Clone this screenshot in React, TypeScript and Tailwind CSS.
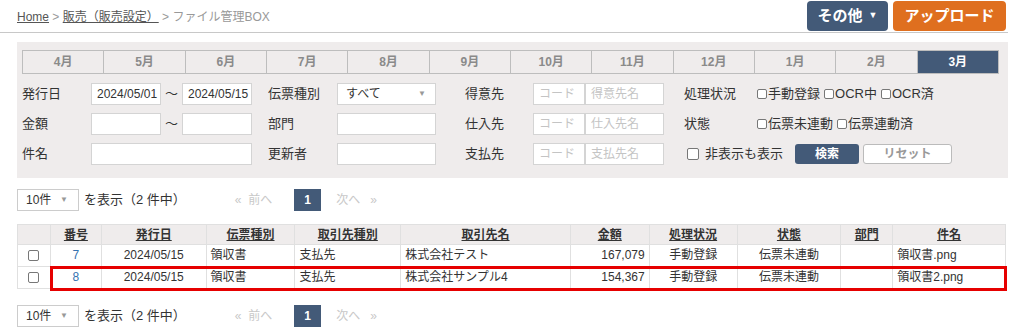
import React from "react";

const months = ["4月", "5月", "6月", "7月", "8月", "9月", "10月", "11月", "12月", "1月", "2月", "3月"];

const font = { fontFamily: '"Liberation Sans", "Noto Sans CJK JP", sans-serif' };

function Box({ w, placeholder, value }: { w: string; placeholder?: string; value?: string }) {
  return (
    <div className={`${w} h-[22px] border border-[#d4d4d4] bg-white px-[5px] text-[12px] leading-[20px] ${value ? "text-[#333]" : "text-[#c4c4c4]"}`}>
      {value ?? placeholder ?? ""}
    </div>
  );
}

function Check({ label }: { label: string }) {
  return (
    <span className="flex items-center mr-[4px]">
      <span className="w-[10px] h-[10px] border border-[#777] rounded-[2px] bg-white mr-[1px]" />
      {label}
    </span>
  );
}

function Pager() {
  return (
    <div className="flex items-center h-[22px] text-[13px] text-[#333]">
      <div className="w-[62px] h-[22px] border border-[#ccc] bg-white flex items-center justify-between pl-[8px] pr-[10px] text-[12px]">
        <span>10件</span>
        <span className="text-[#999] text-[8px]">▼</span>
      </div>
      <span className="ml-[5px]">を表示（2 件中）</span>
      <span className="ml-[49px] text-[#c8c8c8] text-[12px]">«&nbsp; 前へ</span>
      <span className="ml-[22px] w-[27px] h-[22px] bg-[#435a78] text-white font-bold text-[12px] flex items-center justify-center">1</span>
      <span className="ml-[15px] text-[#c8c8c8] text-[12px]">次へ&nbsp;&nbsp; »</span>
    </div>
  );
}

const cols = [
  { w: "w-[32px]", h: "", a: "text-center" },
  { w: "w-[51px]", h: "番号", a: "text-center" },
  { w: "w-[105px]", h: "発行日", a: "text-center" },
  { w: "w-[89px]", h: "伝票種別", a: "text-left pl-[4px]" },
  { w: "w-[106px]", h: "取引先種別", a: "text-left pl-[4px]" },
  { w: "w-[170px]", h: "取引先名", a: "text-left pl-[4px]" },
  { w: "w-[79px]", h: "金額", a: "text-right pr-[4px]" },
  { w: "w-[88px]", h: "処理状況", a: "text-center" },
  { w: "w-[104px]", h: "状態", a: "text-center" },
  { w: "w-[52px]", h: "部門", a: "text-center" },
  { w: "w-[113px]", h: "件名", a: "text-left pl-[4px]" },
];

const rows = [
  ["7", "2024/05/15", "領収書", "支払先", "株式会社テスト", "167,079", "手動登録", "伝票未連動", "", "領収書.png"],
  ["8", "2024/05/15", "領収書", "支払先", "株式会社サンプル4", "154,367", "手動登録", "伝票未連動", "", "領収書2.png"],
];

export default function App() {
  return (
    <div className="w-[1024px] h-[331px] bg-white text-[#333] overflow-hidden" style={font}>
      {/* header */}
      <div className="w-[1008px] h-[33px] border-b border-[#c8c8c8] flex items-start justify-between">
        <div className="pl-[17px] pt-[8px] text-[12px] text-[#999]">
          <span className="text-[#555] underline">Home</span>
          <span> &gt; </span>
          <span className="text-[#555] underline">販売（販売設定）</span>
          <span> &gt; ファイル管理BOX</span>
        </div>
        <div className="flex pt-[1px] pr-[2px] gap-[5px]">
          <div className="w-[81px] h-[30px] rounded-[4px] bg-[#435a78] text-white font-bold text-[15px] flex items-center justify-center gap-[6px]">
            その他<span className="text-[9px]">▼</span>
          </div>
          <div className="w-[113px] h-[30px] rounded-[4px] bg-[#df6f1f] text-white font-bold text-[15px] flex items-center justify-center">
            アップロード
          </div>
        </div>
      </div>

      {/* search panel */}
      <div className="ml-[17px] mt-[9px] w-[991px] h-[136px] bg-[#efecec] pt-[8px] pl-[5px]">
        <div className="flex w-[977px] h-[24px] border border-[#bdbdbd]">
          {months.map((m, i) => (
            <div
              key={m}
              className={`flex-1 flex items-center justify-center text-[12px] font-bold ${i > 0 ? "border-l border-[#bdbdbd]" : ""} ${i === 11 ? "bg-[#435a78] text-white" : "text-[#8a8a8a]"}`}
            >
              {m}
            </div>
          ))}
        </div>

        <div className="text-[13px] mt-[9px]">
          <div className="flex items-center h-[22px]">
            <span className="w-[69px]">発行日</span>
            <Box w="w-[70px]" value="2024/05/01" />
            <span className="w-[21px] text-center">〜</span>
            <Box w="w-[70px]" value="2024/05/15" />
            <span className="w-[85px] pl-[16px]">伝票種別</span>
            <div className="w-[99px] h-[22px] border border-[#d4d4d4] bg-white flex items-center justify-between pl-[8px] pr-[9px] text-[12px]">
              <span>すべて</span>
              <span className="text-[#999] text-[8px]">▼</span>
            </div>
            <span className="w-[97px] pl-[29px]">得意先</span>
            <div className="flex">
              <Box w="w-[52px]" placeholder="コード" />
              <Box w="w-[79px]" placeholder="得意先名" />
            </div>
            <span className="w-[73px] pl-[20px] box-content">処理状況</span>
            <div className="flex text-[13px]">
              <Check label="手動登録" />
              <Check label="OCR中" />
              <Check label="OCR済" />
            </div>
          </div>

          <div className="flex items-center h-[22px] mt-[8px]">
            <span className="w-[69px]">金額</span>
            <Box w="w-[70px]" />
            <span className="w-[21px] text-center">〜</span>
            <Box w="w-[70px]" />
            <span className="w-[85px] pl-[16px]">部門</span>
            <Box w="w-[99px]" />
            <span className="w-[97px] pl-[29px]">仕入先</span>
            <div className="flex">
              <Box w="w-[52px]" placeholder="コード" />
              <Box w="w-[79px]" placeholder="仕入先名" />
            </div>
            <span className="w-[73px] pl-[20px] box-content">状態</span>
            <div className="flex">
              <Check label="伝票未連動" />
              <Check label="伝票連動済" />
            </div>
          </div>

          <div className="flex items-center h-[22px] mt-[8px]">
            <span className="w-[69px]">件名</span>
            <Box w="w-[161px]" />
            <span className="w-[85px] pl-[16px]">更新者</span>
            <Box w="w-[99px]" />
            <span className="w-[97px] pl-[29px]">支払先</span>
            <div className="flex">
              <Box w="w-[52px]" placeholder="コード" />
              <Box w="w-[79px]" placeholder="支払先名" />
            </div>
            <span className="ml-[23px] w-[12px] h-[12px] border border-[#777] rounded-[2px] bg-white" />
            <span className="ml-[6px] w-[90px]">非表示も表示</span>
            <div className="w-[64px] h-[20px] rounded-[3px] bg-[#435a78] text-white font-bold text-[12px] flex items-center justify-center">
              検索
            </div>
            <div className="ml-[4px] w-[89px] h-[20px] rounded-[3px] border border-[#bbb] bg-white text-[#999] font-bold text-[12px] flex items-center justify-center">
              リセット
            </div>
          </div>
        </div>
      </div>

      {/* pager top */}
      <div className="ml-[17px] mt-[11px]">
        <Pager />
      </div>

      {/* table */}
      <div className="relative ml-[17px] mt-[13px] w-[989px] text-[12px]">
        <div className="flex h-[21px] bg-[#efecec] border border-[#e0e0e0]">
          {cols.map((c, i) => (
            <div
              key={i}
              className={`${c.w} flex items-center justify-center font-bold text-[#333] ${i > 0 ? "border-l border-[#e0e0e0]" : ""}`}
            >
              <span className="underline">{c.h}</span>
            </div>
          ))}
        </div>
        {rows.map((r, ri) => (
          <div key={ri} className="flex h-[22px] border border-t-0 border-[#e0e0e0]">
            <div className={`${cols[0].w} flex items-center justify-center`}>
              <span className="w-[11px] h-[11px] border border-[#777] rounded-[2px] bg-white" />
            </div>
            {r.map((v, ci) => (
              <div
                key={ci}
                className={`${cols[ci + 1].w} ${cols[ci + 1].a} border-l border-[#e0e0e0] leading-[21px] whitespace-nowrap overflow-hidden ${ci === 0 ? "text-[#3572b0]" : "text-[#333]"}`}
              >
                {v}
              </div>
            ))}
          </div>
        ))}
        <div className="absolute left-[33px] top-[42px] w-[957px] h-[25px] border-[3px] border-[#e60000]" />
      </div>

      {/* pager bottom */}
      <div className="ml-[17px] mt-[16px]">
        <Pager />
      </div>
    </div>
  );
}
